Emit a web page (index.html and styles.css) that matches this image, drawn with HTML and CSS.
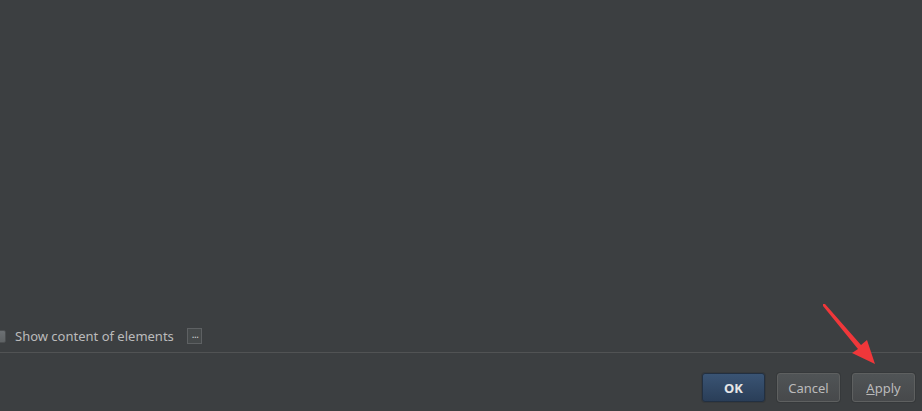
FILE: index.html
```html
<!DOCTYPE html>
<html>
<head>
<meta charset="utf-8">
<link rel="stylesheet" href="styles.css">
</head>
<body>
<div class="dialog">
  <div class="content"></div>
  <div class="option-row">
    <span class="checkbox"></span>
    <span class="label">Show content of elements</span>
    <span class="more">...</span>
  </div>
  <div class="divider"></div>
  <div class="buttons">
    <button class="btn btn-default">OK</button>
    <button class="btn">Cancel</button>
    <button class="btn"><u>A</u>pply</button>
  </div>
  <svg class="arrow" width="70" height="75" viewBox="0 0 70 75">
    <path d="M8 8 L10 8 L46 49 L52 44 L60 68 L37 57 L43 53 L8 10 Z" fill="#f0373a"/>
  </svg>
</div>
</body>
</html>
```

FILE: styles.css
```css
html, body {
  margin: 0;
  padding: 0;
  background: #3c3f41;
  width: 922px;
  height: 411px;
  overflow: hidden;
  font-family: "Open Sans", "Noto Sans", sans-serif;
}
.dialog {
  position: relative;
  width: 922px;
  height: 411px;
  display: flex;
  flex-direction: column;
}
.content {
  height: 327px;
}
.option-row {
  display: flex;
  align-items: center;
  height: 18px;
  margin-left: -7px;
}
.checkbox {
  width: 13px;
  height: 13px;
  box-sizing: border-box;
  background: linear-gradient(#6c7073, #5f6365);
  border: 1px solid #4c4f51;
  border-radius: 2px;
  margin-right: 9px;
}
.label {
  color: #bbbbbb;
  font-size: 13px;
  font-family: "Noto Sans", "Open Sans", sans-serif;
}
.more {
  margin-left: 13px;
  width: 15px;
  height: 16px;
  box-sizing: border-box;
  border: 1px solid #5e6163;
  background: #45494a;
  color: #d0d0d0;
  font-family: "DejaVu Sans", sans-serif;
  font-size: 10px;
  line-height: 12px;
  text-align: center;
  letter-spacing: -1px;
  padding-left: 1px;
}
.divider {
  margin-top: 7px;
  height: 1px;
  background: #515354;
}
.buttons {
  display: flex;
  justify-content: flex-end;
  gap: 12px;
  padding: 20px 7px 0 0;
}
.btn {
  width: 63px;
  height: 29px;
  box-sizing: border-box;
  border: 1px solid #5e6060;
  border-radius: 3px;
  background: linear-gradient(#505456, #47494b);
  color: #bbbbbb;
  font-family: "Noto Sans", "Open Sans", sans-serif;
  font-size: 13px;
  padding: 0;
  box-shadow: 0 0 0 1px #36393b;
}
.btn u {
  text-decoration-thickness: 1px;
}
.btn-default {
  background: linear-gradient(#3a5474, #2a3e58);
  border-color: #223042;
  color: #e6e6e6;
  font-weight: bold;
}
.arrow {
  position: absolute;
  left: 815px;
  top: 296px;
}
```
